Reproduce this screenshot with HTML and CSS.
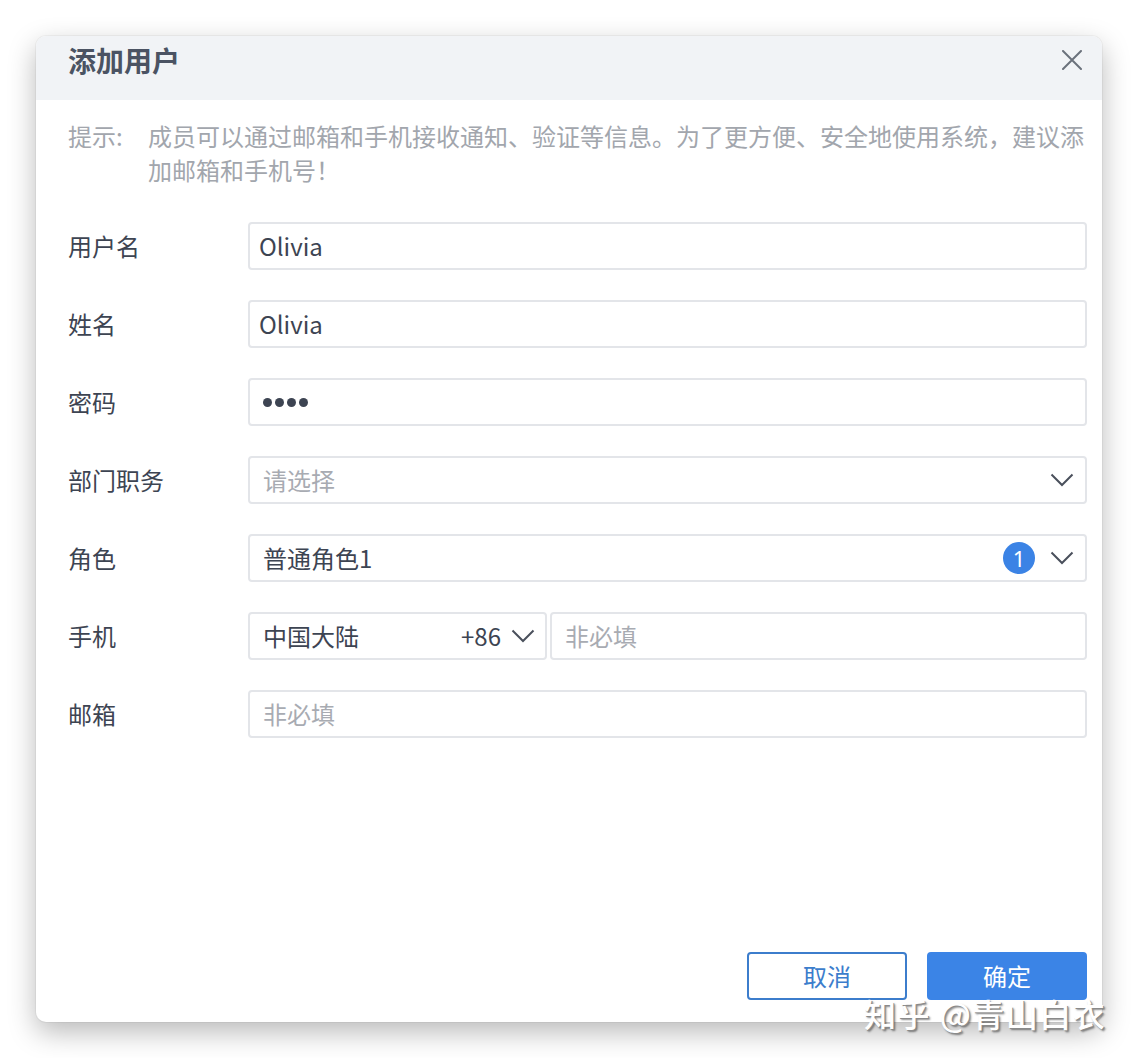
FILE: index.html
```html
<!DOCTYPE html>
<html lang="zh-CN">
<head>
<meta charset="utf-8">
<title>添加用户</title>
<link rel="stylesheet" href="styles.css">
</head>
<body>
<div class="dialog">
  <div class="dialog-header">
    <h1 class="dialog-title">添加用户</h1>
    <svg class="close-icon" width="20" height="20" viewBox="0 0 20 20"><path d="M1 1 L19 19 M19 1 L1 19" stroke="#6b717c" stroke-width="2" fill="none" stroke-linecap="round"/></svg>
  </div>
  <div class="dialog-body">
    <div class="tip">
      <span class="tip-label">提示:</span>
      <span class="tip-text">成员可以通过邮箱和手机接收通知、验证等信息。为了更方便、安全地使用系统，建议添加邮箱和手机号！</span>
    </div>
    <div class="form">
      <div class="row">
        <div class="label">用户名</div>
        <div class="field"><span class="value latin">Olivia</span></div>
      </div>
      <div class="row">
        <div class="label">姓名</div>
        <div class="field"><span class="value latin">Olivia</span></div>
      </div>
      <div class="row">
        <div class="label">密码</div>
        <div class="field"><span class="dots"><i></i><i></i><i></i><i></i></span></div>
      </div>
      <div class="row">
        <div class="label">部门职务</div>
        <div class="field select"><span class="placeholder">请选择</span>
          <svg class="chev" width="24" height="14" viewBox="0 0 24 14"><path d="M1.5 1.5 L12 12 L22.5 1.5" stroke="#4a505c" stroke-width="2" fill="none"/></svg>
        </div>
      </div>
      <div class="row">
        <div class="label">角色</div>
        <div class="field select"><span class="value">普通角色1</span>
          <span class="badge">1</span>
          <svg class="chev" width="24" height="14" viewBox="0 0 24 14"><path d="M1.5 1.5 L12 12 L22.5 1.5" stroke="#4a505c" stroke-width="2" fill="none"/></svg>
        </div>
      </div>
      <div class="row">
        <div class="label">手机</div>
        <div class="phone">
          <div class="field area"><span class="value">中国大陆</span><span class="code">+86</span>
            <svg class="chev small" width="24" height="14" viewBox="0 0 24 14"><path d="M1.5 1.5 L12 12 L22.5 1.5" stroke="#4a505c" stroke-width="2" fill="none"/></svg>
          </div>
          <div class="field grow"><span class="placeholder">非必填</span></div>
        </div>
      </div>
      <div class="row">
        <div class="label">邮箱</div>
        <div class="field"><span class="placeholder">非必填</span></div>
      </div>
    </div>
  </div>
  <div class="dialog-footer">
    <button class="btn btn-cancel">取消</button>
    <button class="btn btn-ok">确定</button>
  </div>
</div>
<div class="watermark">知乎 @青山白衣</div>
</body>
</html>
```
FILE: styles.css
```css
* { box-sizing: border-box; }
html, body {
  margin: 0;
  padding: 0;
  background: #ffffff;
}
body {
  width: 1138px;
  height: 1058px;
  padding: 36px 36px 0 36px;
  position: relative;
  font-family: "PingFang SC", "Noto Sans CJK SC", sans-serif;
  color: #3d4452;
  overflow: hidden;
}
.dialog {
  width: 1066px;
  height: 986px;
  background: #fff;
  border-radius: 10px;
  box-shadow: 0 10px 28px rgba(0,0,0,0.28), 0 0 0 1px rgba(0,0,0,0.04);
  display: flex;
  flex-direction: column;
  overflow: hidden;
}
.dialog-header {
  height: 64px;
  background: #f1f3f6;
  display: flex;
  align-items: center;
  justify-content: space-between;
  padding: 0 20px 16px 32px;
  flex-shrink: 0;
}
.dialog-title {
  margin: 0;
  font-size: 28px;
  line-height: 40px;
  font-weight: 600;
  color: #4b5363;
}
.close-icon { display: block; }
.dialog-body {
  padding: 19px 15px 0 32px;
}
.tip {
  display: flex;
  font-size: 24px;
  line-height: 34px;
  color: #a2a6ad;
}
.tip-label {
  width: 80px;
  flex-shrink: 0;
}
.tip-text { flex: 1; }
.form {
  margin-top: 35px;
  display: flex;
  flex-direction: column;
  gap: 30px;
}
.row {
  display: flex;
  align-items: center;
  height: 48px;
}
.label {
  width: 180px;
  flex-shrink: 0;
  font-size: 24px;
  line-height: 34px;
  color: #3d4452;
}
.field {
  flex: 1;
  height: 48px;
  border: 2px solid #e3e5e9;
  border-radius: 4px;
  display: flex;
  align-items: center;
  padding: 0 11px 0 13px;
  font-size: 24px;
  line-height: 34px;
  background: #fff;
}
.value { color: #3d4452; }
.latin { margin-left: -4px; }
.placeholder { color: #a8abb2; }
.select { justify-content: space-between; }
.select .value, .select .placeholder { flex: 1; }
.badge {
  width: 32px;
  height: 32px;
  border-radius: 50%;
  background: #3b83e5;
  color: #fff;
  font-size: 22px;
  line-height: 32px;
  text-align: center;
  margin-right: 15px;
  font-family: "Noto Sans", sans-serif;
}
.chev { display: block; flex-shrink: 0; }
.dots {
  display: flex;
  gap: 3px;
  padding-left: 0;
}
.dots i {
  display: block;
  width: 9px;
  height: 9px;
  border-radius: 50%;
  background: #3d4452;
}
.phone {
  flex: 1;
  display: flex;
  gap: 3px;
}
.area {
  flex: 0 0 299px;
  padding-right: 10px;
}
.area .value { flex: 1; }
.code { margin-right: 10px; }
.grow { flex: 1; }
.dialog-footer {
  margin-top: auto;
  display: flex;
  justify-content: flex-end;
  gap: 20px;
  padding: 0 15px 22px 0;
}
.btn {
  width: 160px;
  height: 48px;
  border-radius: 4px;
  font-family: "PingFang SC", "Noto Sans CJK SC", sans-serif;
  font-size: 24px;
  line-height: 34px;
  cursor: pointer;
}
.btn-cancel {
  background: #fff;
  border: 2px solid #3c7dcc;
  color: #3c7dcc;
}
.btn-ok {
  background: #3b84e6;
  border: 2px solid #3b84e6;
  color: #fff;
}
.watermark {
  position: absolute;
  left: 864px;
  top: 999px;
  font-size: 32px;
  line-height: 28px;
  font-weight: 500;
  color: #ffffff;
  letter-spacing: 1.5px;
  text-shadow: 1px 1px 0 #8a8a8a, 2px 2px 2px rgba(0,0,0,0.45);
}
```
